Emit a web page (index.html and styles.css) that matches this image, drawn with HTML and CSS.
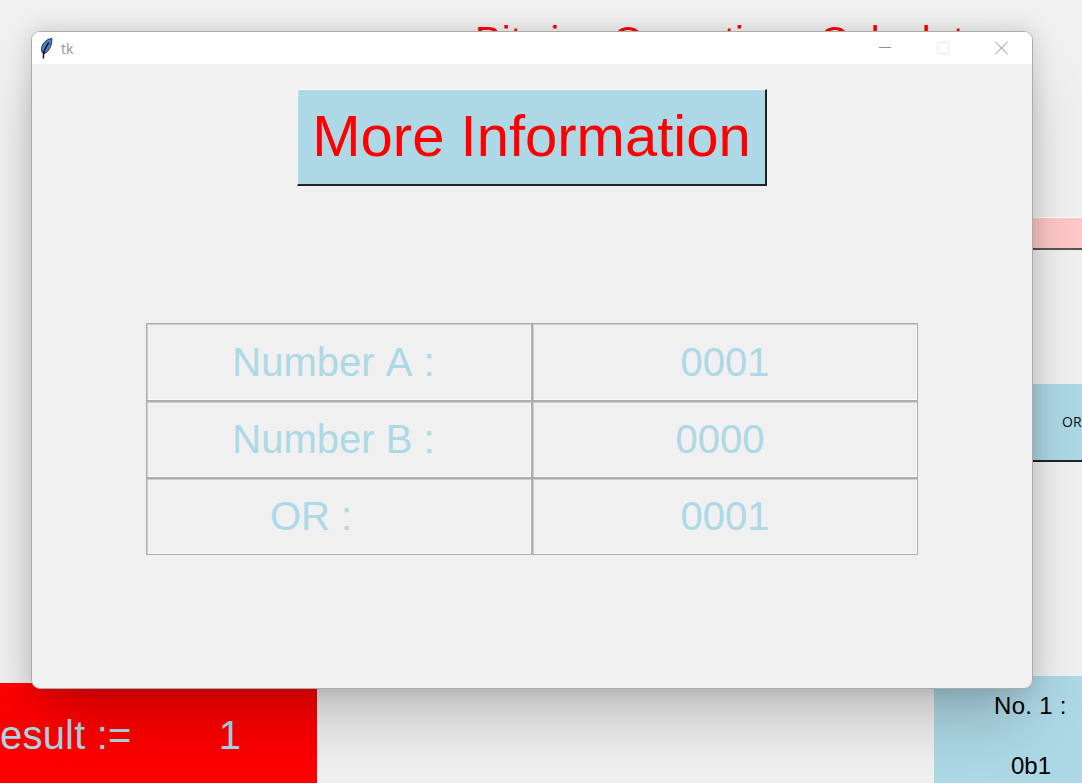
FILE: index.html
```html
<!DOCTYPE html>
<html lang="en">
<head>
<meta charset="UTF-8" />
<title>tk</title>
<link rel="stylesheet" href="styles.css">
</head>
<body>

<div class="desktop">
  <!-- main calculator window, mostly hidden behind the popup -->
  <h1 class="app-title">Bitwise Operations Calculator</h1>
  <div class="app-pink"></div>
  <div class="app-op">OR</div>
  <div class="app-result"><span>esult :=</span><span class="result-value">1</span></div>
  <div class="app-number">
    <div class="number-label">No. 1 :</div>
    <div class="number-value">0b1</div>
  </div>

  <div class="window">
    <div class="titlebar">
      <svg class="feather" width="13" height="21" viewBox="0 0 13 21">
        <path d="M11.8 0.5C6.5 1 2 5.5 1.6 10.5C1.4 13 2 15 3.4 15.8C8 14.8 12.2 8.5 11.8 0.5Z" fill="#4a82cc" stroke="#1d2c48" stroke-width="1"/>
        <path d="M8.8 4.5C6.4 8 4.4 11.5 3.6 15.5L3.4 20.5" fill="none" stroke="#10141c" stroke-width="1.5"/>
      </svg>
      <span class="win-title">tk</span>
      <div class="win-controls">
        <svg class="win-btn" width="58" height="16" viewBox="0 0 58 16"><path d="M0 7.5H12" stroke="#8f8f8f" stroke-width="1"/></svg>
        <svg class="win-btn" width="58" height="16" viewBox="0 0 58 16"><rect x="0.5" y="2.5" width="11" height="11" rx="2" fill="none" stroke="#e6e6e6" stroke-width="1"/></svg>
        <svg class="win-btn-close" width="13" height="16" viewBox="0 0 13 16"><path d="M0.5 2L12.5 14M12.5 2L0.5 14" stroke="#8a8a8a" stroke-width="1"/></svg>
      </div>
    </div>
    <div class="win-body">
      <button class="info-btn">More Information</button>
      <div class="grid">
        <div class="cell"><span class="shift-label">Number A :</span></div>
        <div class="cell">0001</div>
        <div class="cell"><span class="shift-label">Number B :</span></div>
        <div class="cell"><span class="shift-zero">0000</span></div>
        <div class="cell"><span class="shift-or">OR :</span></div>
        <div class="cell">0001</div>
      </div>
    </div>
  </div>
</div>

</body>
</html>
```

FILE: styles.css
```css
html, body {
  margin: 0;
  height: 100%;
  overflow: hidden;
}
body {
  font-family: 'Liberation Sans', Arial, sans-serif;
  font-kerning: none;
  background: #f0f0f0;
}
.desktop {
  position: relative;
  width: 1082px;
  height: 783px;
  overflow: hidden;
}
.app-title {
  position: absolute;
  left: 475px;
  top: 19px;
  margin: 0;
  font-size: 40px;
  font-weight: normal;
  color: #ff0000;
  white-space: nowrap;
}
.app-pink {
  position: absolute;
  left: 1000px;
  top: 217px;
  width: 82px;
  height: 33px;
  box-sizing: border-box;
  background: #ffc8c8;
  border-top: 1px solid #fff;
  border-bottom: 2px solid #555;
}
.app-op {
  position: absolute;
  left: 1000px;
  top: 384px;
  width: 82px;
  height: 78px;
  box-sizing: border-box;
  padding-left: 62px;
  background: #add8e6;
  border-bottom: 2px solid #222;
  font-family: 'Open Sans', sans-serif;
  font-size: 14px;
  line-height: 75px;
  color: #111;
  white-space: nowrap;
}
.app-result {
  position: absolute;
  left: 0;
  top: 683px;
  width: 317px;
  height: 100px;
  box-sizing: border-box;
  padding-top: 30px;
  background: #ff0000;
  color: #add8e6;
  font-size: 40px;
  letter-spacing: 0.2px;
  white-space: nowrap;
}
.result-value {
  margin-left: 87px;
}
.app-number {
  position: absolute;
  left: 934px;
  top: 676px;
  width: 148px;
  height: 107px;
  box-sizing: border-box;
  padding-top: 16px;
  background: #add8e6;
  color: #000;
  font-size: 24px;
  white-space: nowrap;
}
.number-label {
  margin-left: 60px;
  letter-spacing: 0.3px;
}
.number-value {
  margin-top: 32px;
  margin-left: 77px;
}
.desktop::after {
  content: "";
  position: absolute;
  left: 31px;
  top: 31px;
  width: 1002px;
  height: 658px;
  border-radius: 9px;
  box-shadow: 0 0 24px rgba(0, 0, 0, 0.16), 0 40px 60px -10px rgba(0, 0, 0, 0.2);
  pointer-events: none;
}
.window {
  position: absolute;
  left: 31px;
  top: 31px;
  z-index: 1;
  width: 1002px;
  height: 658px;
  box-sizing: border-box;
  background: #f0f0f0;
  border: 1px solid #ababab;
  border-radius: 9px;
  overflow: hidden;
}
.titlebar {
  display: flex;
  align-items: center;
  height: 32px;
  box-sizing: border-box;
  padding-left: 8px;
  background: #fff;
}
.feather {
  flex: none;
}
.win-title {
  margin-left: 8px;
  font-family: 'Open Sans', sans-serif;
  font-size: 14px;
  color: #969696;
}
.win-controls {
  display: flex;
  align-items: center;
  margin-left: auto;
  padding-right: 24px;
}
.win-body {
  display: flex;
  flex-direction: column;
  align-items: center;
}
.info-btn {
  width: 470px;
  height: 97px;
  margin-top: 25px;
  padding: 0 0 4px;
  box-sizing: border-box;
  background: #add8e6;
  color: #ff0000;
  font-family: 'Liberation Sans', Arial, sans-serif;
  font-size: 58px;
  font-kerning: none;
  border: 1px solid;
  border-color: #fff #222 #222 #fff;
  border-bottom-width: 2px;
  border-right-width: 2px;
}
.grid {
  display: grid;
  grid-template-columns: 386px 386px;
  grid-template-rows: 78px 77px 77px;
  width: 772px;
  margin-top: 137px;
}
.cell {
  display: flex;
  align-items: center;
  justify-content: center;
  box-sizing: border-box;
  border: 1px solid #adadad;
  box-shadow: inset 1px 1px 0 #cdcdcd, inset -1px -1px 0 #fafafa;
  color: #add8e6;
  font-size: 40px;
}
.shift-label {
  margin-right: 11px;
}
.shift-zero {
  margin-right: 10px;
}
.shift-or {
  margin-right: 56px;
}
```
